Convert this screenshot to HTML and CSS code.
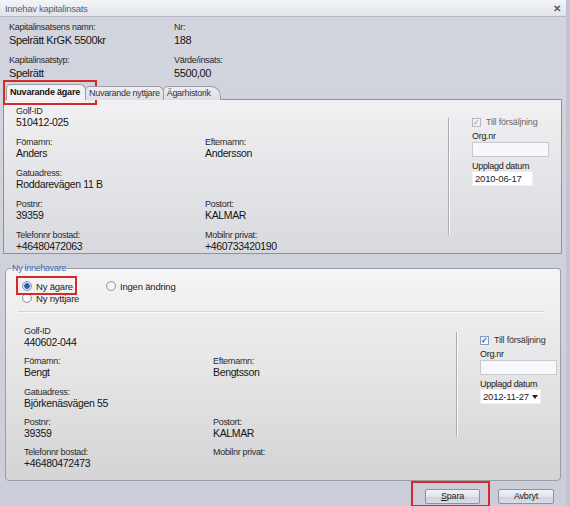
FILE: index.html
```html
<!DOCTYPE html>
<html>
<head>
<meta charset="utf-8">
<link rel="stylesheet" href="styles.css">
</head>
<body>
<div class="window">
  <div class="titlebar">
    <span class="title">Innehav kapitalinsats</span>
    <span class="close">✕</span>
  </div>
  <div class="content">
    <div class="info">
      <div class="field"><div class="lbl">Kapitalinsatsens namn:</div><div class="val big">Spelrätt KrGK 5500kr</div></div>
      <div class="field"><div class="lbl">Nr:</div><div class="val big">188</div></div>
      <div class="field"><div class="lbl">Kapitalinsatstyp:</div><div class="val big">Spelrätt</div></div>
      <div class="field"><div class="lbl">Värde/insats:</div><div class="val big">5500,00</div></div>
    </div>

    <div class="tabs">
      <div class="tab active">Nuvarande ägare</div>
      <div class="tab">Nuvarande nyttjare</div>
      <div class="tab last">Ägarhistorik</div>
    </div>
    <div class="tabpanel">
      <div class="fields">
        <div class="field wide"><div class="lbl">Golf-ID</div><div class="val">510412-025</div></div>
        <div class="field"><div class="lbl">Förnamn:</div><div class="val">Anders</div></div>
        <div class="field"><div class="lbl">Efternamn:</div><div class="val">Andersson</div></div>
        <div class="field wide"><div class="lbl">Gatuadress:</div><div class="val">Roddarevägen 11 B</div></div>
        <div class="field"><div class="lbl">Postnr:</div><div class="val">39359</div></div>
        <div class="field"><div class="lbl">Postort:</div><div class="val">KALMAR</div></div>
        <div class="field"><div class="lbl">Telefonnr bostad:</div><div class="val">+46480472063</div></div>
        <div class="field"><div class="lbl">Mobilnr privat:</div><div class="val">+460733420190</div></div>
      </div>
      <div class="vsep"></div>
      <div class="side">
        <div class="check disabled"><span class="box">✓</span>Till försäljning</div>
        <div class="slbl">Org.nr</div>
        <div class="input org"></div>
        <div class="slbl">Upplagd datum</div>
        <div class="input date">2010-06-17</div>
      </div>
    </div>

    <fieldset class="group">
      <legend>Ny innehavare</legend>
      <div class="radios">
        <div class="radiocol">
          <div class="radio checked"><span class="dot"></span>Ny ägare</div>
          <div class="radio"><span class="dot"></span>Ny nyttjare</div>
        </div>
        <div class="radio"><span class="dot"></span>Ingen ändring</div>
      </div>
      <div class="hsep"></div>
      <div class="groupbody">
        <div class="fields g">
          <div class="field wide"><div class="lbl">Golf-ID</div><div class="val">440602-044</div></div>
          <div class="field"><div class="lbl">Förnamn:</div><div class="val">Bengt</div></div>
          <div class="field"><div class="lbl">Efternamn:</div><div class="val">Bengtsson</div></div>
          <div class="field wide"><div class="lbl">Gatuadress:</div><div class="val">Björkenäsvägen 55</div></div>
          <div class="field"><div class="lbl">Postnr:</div><div class="val">39359</div></div>
          <div class="field"><div class="lbl">Postort:</div><div class="val">KALMAR</div></div>
          <div class="field"><div class="lbl">Telefonnr bostad:</div><div class="val">+46480472473</div></div>
          <div class="field"><div class="lbl">Mobilnr privat:</div><div class="val"></div></div>
        </div>
        <div class="vsep g"></div>
        <div class="side g">
          <div class="check"><span class="box">✓</span>Till försäljning</div>
          <div class="slbl">Org.nr</div>
          <div class="input org"></div>
          <div class="slbl">Upplagd datum</div>
          <div class="input date dd">2012-11-27<span class="arrow"></span></div>
        </div>
      </div>
    </fieldset>

    <div class="buttons">
      <div class="btn"><u>S</u>para</div>
      <div class="btn">Avbryt</div>
    </div>
  </div>

  <div class="mark m1"></div>
  <div class="mark m2"></div>
  <div class="mark m3"></div>
</div>
</body>
</html>
```

FILE: styles.css
```css
* { box-sizing: border-box; }
html, body { margin: 0; padding: 0; }
body {
  width: 570px;
  height: 506px;
  overflow: hidden;
  font-family: "Liberation Sans", Arial, sans-serif;
  color: #1e1e1e;
  background: #cdd0da;
}
.window {
  position: relative;
  width: 570px;
  height: 506px;
  background: linear-gradient(#d3d5de, #cbced8);
  border-right: 4px solid #c2c5cf;
}
.titlebar {
  height: 17px;
  display: flex;
  align-items: center;
  justify-content: space-between;
  padding: 0 5px 0 5px;
  background: linear-gradient(#f3f4f7, #e1e4ea);
  border-bottom: 1px solid #b4b8c3;
}
.title { font-size: 9.5px; letter-spacing: -0.3px; color: #5b6070; }
.close { font-size: 10px; color: #555a66; font-weight: bold; }
.content { padding: 0 2px 0 3px; }

.lbl { font-size: 9px; letter-spacing: -0.3px; line-height: 11px; color: #2b2b2b; white-space: nowrap; }
.val { font-size: 10.5px; letter-spacing: -0.35px; line-height: 12px; margin-top: -1px; white-space: nowrap; color: #151515; }
.val.big { font-size: 11px; letter-spacing: -0.4px; line-height: 14px; margin-top: 0; }

.info {
  display: grid;
  grid-template-columns: 165px 200px;
  grid-auto-rows: 25px;
  row-gap: 7.5px;
  padding: 5px 0 0 6px;
  height: 66px;
}

.tabs {
  display: flex;
  align-items: flex-end;
  height: 17px;
  padding-left: 3px;
  margin-bottom: -1px;
  position: relative;
  z-index: 1;
}
.tab {
  font-size: 9px;
  letter-spacing: -0.3px;
  height: 14px;
  line-height: 13px;
  padding: 0 3px;
  border: 1px solid #9a9da6;
  border-bottom: none;
  border-radius: 5px 6px 0 0;
  background: linear-gradient(#eceef2, #dcdee4);
  color: #333;
  margin-right: -1px;
}
.tab.active {
  height: 16px;
  line-height: 15px;
  font-weight: bold;
  letter-spacing: -0.2px;
  background: #f2f2f4;
  color: #111;
  padding: 0 5px 0 3px;
}
.tab.last { border-radius: 5px 10px 0 0; padding-right: 9px; }

.tabpanel {
  height: 155px;
  margin-right: 2px;
  border: 1px solid #8f929b;
  background: linear-gradient(#f1f1f3, #d8d9de);
  display: flex;
  padding: 6px 0 0 12px;
}
.fields {
  display: grid;
  grid-template-columns: 189px 243px;
  grid-auto-rows: 23px;
  row-gap: 8px;
}
.fields .wide { grid-column: 1 / 3; }
.vsep {
  width: 2px;
  height: 117px;
  margin-top: 12px;
  border-left: 1px solid #a9abb2;
  border-right: 1px solid #fbfbfb;
}
.side { padding: 11px 0 0 22px; }
.check {
  display: flex;
  align-items: center;
  font-size: 9px;
  letter-spacing: -0.2px;
  color: #333;
  height: 10px;
}
.check .box {
  width: 9px; height: 9px;
  border: 1px solid #8a9ab8;
  background: linear-gradient(#e9edf5, #ffffff);
  font-size: 8px;
  line-height: 7px;
  text-align: center;
  color: #2a50a0;
  margin-right: 5px;
  font-weight: bold;
}
.check.disabled { color: #6a6a6a; }
.check.disabled .box { border-color: #b7b9be; color: #b0b0b0; background: #f0f0f0; }
.slbl { font-size: 9px; letter-spacing: -0.3px; line-height: 10px; margin-top: 4px; color: #222; }
.input {
  background: #f7f8fb;
  border: 1px solid #c7c9cf;
  font-size: 9.5px;
  letter-spacing: -0.2px;
  height: 15px;
  line-height: 13px;
  padding-left: 2px;
  white-space: nowrap;
}
.input.org { width: 77px; margin-bottom: 1px; margin-top: 1px; }
.input.date { width: 61px; border-color: #f0f0f0; background: #fff; position: relative; }

.group {
  margin: 9px 3px 0 2px;
  padding: 0;
  border: 1px solid #9a9da5;
  border-radius: 5px 3px 4px 4px;
  background: linear-gradient(#f5f5f5, #d4d4d6);
  height: 218px;
  min-width: 0;
}
.group legend {
  font-size: 9px;
  letter-spacing: -0.3px;
  color: #3b68b5;
  padding: 0 1px;
  margin-left: 5px;
  line-height: 10px;
}
.radios { display: flex; padding: 7px 0 0 16px; height: 38px; }
.radiocol { width: 84px; }
.radio {
  display: flex;
  align-items: center;
  font-size: 9.5px;
  letter-spacing: -0.2px;
  height: 12px;
  color: #222;
}
.radio .dot {
  width: 10px; height: 10px;
  border-radius: 50%;
  border: 1px solid #9298a6;
  background: radial-gradient(circle, #f8f8f8 40%, #dcdee4);
  margin-right: 4px;
}
.radio.checked .dot {
  background: radial-gradient(circle, #2c5fb8 0 2.5px, #c9d6ee 3px, #f4f6fa);
}
.hsep {
  height: 2px;
  margin: 0 16px 0 12px;
  border-top: 1px solid #d5d5d7;
  border-bottom: 1px solid #fbfbfb;
}
.groupbody { display: flex; padding: 13px 0 0 18px; }
.fields.g { grid-template-columns: 189px 243px; row-gap: 7.3px; }
.vsep.g { height: 104px; margin-top: 6px; }
.side.g { padding: 9px 0 0 22px; }
.arrow {
  position: absolute;
  right: 2px; top: 5px;
  border-left: 3px solid transparent;
  border-right: 3px solid transparent;
  border-top: 4px solid #222;
}
.input.dd { width: 61px; padding-right: 10px; }

.buttons {
  display: flex;
  justify-content: flex-end;
  gap: 18px;
  padding: 8px 10px 0 0;
}
.btn {
  width: 56px;
  height: 15px;
  font-size: 9px;
  letter-spacing: -0.2px;
  line-height: 13px;
  text-align: center;
  border: 1px solid #8e929c;
  border-radius: 2px;
  background: linear-gradient(#f2f3f6 0%, #e1e3e9 50%, #cfd2da 51%, #dadde4 100%);
  color: #222;
}
.btn:first-child { width: 55px; }

.mark { position: absolute; border: 2px solid #d42a2a; }
.m1 { left: 3px; top: 80px; width: 94px; height: 25px; }
.m2 { left: 16px; top: 276px; width: 61px; height: 19px; }
.m3 { left: 411px; top: 481px; width: 79px; height: 26px; }
```
